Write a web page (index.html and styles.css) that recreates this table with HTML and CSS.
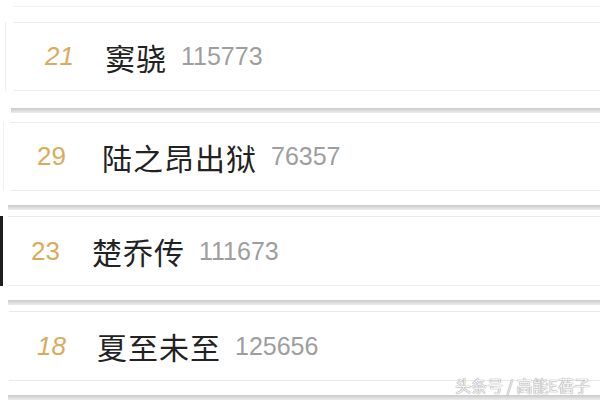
FILE: index.html
```html
<!DOCTYPE html>
<html lang="zh-CN">
<head>
    <meta charset="UTF-8">
    <meta name="viewport" content="width=device-width, initial-scale=1.0">
    <title>热搜榜</title>
    <link rel="stylesheet" href="styles.css">
</head>
<body>
    <div class="page">
        <div class="strip strip-1">
            <div class="top-rule"></div>
            <div class="card">
                <div class="item">
                    <span class="rank italic">21</span>
                    <span class="name">窦骁</span>
                    <span class="count">115773</span>
                </div>
            </div>
            <div class="shade"></div>
        </div>

        <div class="strip strip-2">
            <div class="card">
                <div class="item">
                    <span class="rank">29</span>
                    <span class="name">陆之昂出狱</span>
                    <span class="count">76357</span>
                </div>
            </div>
            <div class="shade"></div>
        </div>

        <div class="strip strip-3">
            <div class="card">
                <div class="item">
                    <span class="rank">23</span>
                    <span class="name">楚乔传</span>
                    <span class="count">111673</span>
                </div>
            </div>
            <div class="shade"></div>
        </div>

        <div class="strip strip-4">
            <div class="card">
                <div class="item">
                    <span class="rank italic">18</span>
                    <span class="name">夏至未至</span>
                    <span class="count">125656</span>
                </div>
            </div>
            <div class="shade"></div>
        </div>

        <div class="watermark">头条号 / 高能E蓓子</div>
    </div>
</body>
</html>
```

FILE: styles.css
```css
body {
    margin: 0;
    background-color: #fff;
    font-family: "Liberation Sans", "Noto Sans CJK SC", sans-serif;
}
.page {
    position: relative;
    width: 600px;
    height: 400px;
    overflow: hidden;
}
.strip {
    background-color: #fff;
}
.top-rule {
    height: 1px;
    margin: 6px 0 15px 13px;
    background-color: #f1f1f1;
}
.card {
    border-left: 1px solid transparent;
}
.item {
    display: flex;
    align-items: center;
    height: 67px;
    border-top: 1px solid #e9e9e9;
    border-bottom: 1px solid #e9e9e9;
}
.rank {
    width: 60px;
    font-size: 26px;
    color: #dcaa5c;
}
.italic {
    font-style: italic;
}
.name {
    font-family: "Noto Sans CJK SC", sans-serif;
    font-size: 30px;
    color: #222;
    letter-spacing: 1px;
    margin-right: 14px;
}
.count {
    font-size: 25px;
    color: #9e9e9e;
}
.shade {
    height: 5px;
    background: linear-gradient(#c9c9c9, #ececec);
}

/* each strip was cut from a different screenshot, so offsets differ */
.strip-1 .card {
    margin-left: 5px;
    padding-left: 8px;
    border-left-color: #efefef;
}
.strip-1 .item {
    padding-left: 31px;
    margin-bottom: 17px;
}
.strip-1 .shade {
    margin-left: 11px;
}
.strip-2 {
    padding-top: 9px;
}
.strip-2 .card {
    margin-left: 3px;
    padding-left: 7px;
    border-left-color: #f0f0f0;
}
.strip-2 .item {
    padding-left: 26px;
    margin-bottom: 14px;
}
.strip-2 .rank {
    width: 65px;
}
.strip-2 .shade {
    margin-left: 8px;
}
.strip-3 {
    padding-top: 6px;
}
.strip-3 .card {
    padding-left: 5px;
    border-left: 3px solid #1e1e1e;
}
.strip-3 .item {
    height: 68px;
    padding-left: 23px;
    margin-bottom: 14px;
}
.strip-3 .rank {
    width: 61px;
}
.strip-3 .shade {
    margin-left: 8px;
}
.strip-4 {
    padding-top: 6px;
}
.strip-4 .card {
    padding-left: 8px;
}
.strip-4 .item {
    height: 68px;
    padding-left: 28px;
    margin-bottom: 14px;
}
.strip-4 .shade {
    margin-left: 8px;
}
.watermark {
    position: absolute;
    right: 10px;
    bottom: 3px;
    font-family: "Noto Sans CJK SC", sans-serif;
    font-size: 16px;
    color: #f4f4f4;
    text-shadow: 0 0 1px #8a8a8a, 0 0 1px #8a8a8a;
}
```
